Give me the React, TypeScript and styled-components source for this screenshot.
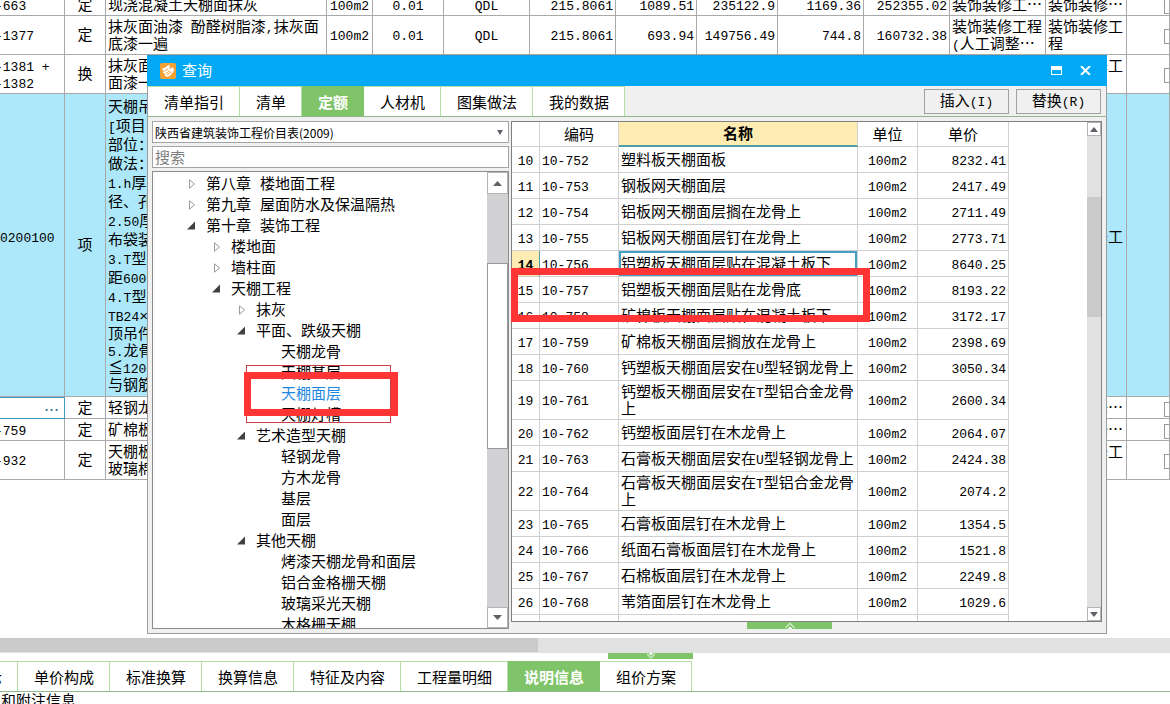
import React from "react";
import styled, { createGlobalStyle, css } from "styled-components";

const cjk = `"Noto Sans CJK SC", sans-serif`;
const mono = `"Liberation Mono", "Noto Sans CJK SC", monospace`;

const color = {
  text: "#000000",
  blue: "#03a9f4",
  green: "#7fc469",
  greenLine: "#b5dfa6",
  greenRule: "#8fb98a",
  cyan: "#ace8fa",
  yellow: "#ffecb3",
  teal: "#4f9fa8",
  panel: "#f0f0f0",
  grid: "#a9a9a9",
  gridLight: "#d0d0d0",
  red: "#ff3434",
  track: "#e1e1e1",
  thumb: "#cacaca",
};

const GlobalStyle = createGlobalStyle`
  *, *::before, *::after { box-sizing: border-box; }
  body { margin: 0; background: #fff; }
  button, input, select { font: inherit; color: inherit; margin: 0; }
`;

const Page = styled.div`
  position: relative;
  display: flex;
  flex-direction: column;
  height: 100vh;
  overflow: hidden;
  background: #fff;
  color: ${color.text};
  font: 15px/17px ${mono};
`;

/* ---------- worksheet behind the dialog ---------- */

const SheetArea = styled.main`
  flex: 1;
  min-height: 0;
  overflow: hidden;
`;

const SheetTable = styled.table`
  width: 100%;
  margin-top: -6px;
  table-layout: fixed;
  border-collapse: separate;
  border-spacing: 0;
`;

const SheetRow = styled.tr<{ $h: number; $active?: boolean }>`
  height: ${(p) => p.$h}px;
  background: ${(p) => (p.$active ? color.cyan : "#fff")};
`;

type Align = "left" | "center" | "right";

const SheetCell = styled.td<{ $align?: Align; $num?: boolean; $editing?: boolean }>`
  padding: 3px 2px 0;
  overflow: hidden;
  white-space: pre;
  vertical-align: middle;
  text-align: ${(p) => p.$align ?? "left"};
  border-right: 1px solid ${color.grid};
  border-bottom: 1px solid ${color.grid};
  ${(p) => p.$num && css`font-size: 13px;`}
  ${(p) =>
    p.$editing &&
    css`
      border-color: #3e9cc4;
      box-shadow: inset 0 1px 0 #3e9cc4;
    `}
`;

const Code = styled.div<{ $flush?: boolean }>`
  margin-left: ${(p) => (p.$flush ? -2 : -7)}px;
`;

const LineGroup = styled.div<{ $lh: number }>`
  line-height: ${(p) => p.$lh}px;
`;

const Dots = styled.span`
  font-family: ${cjk};
  line-height: 1px;
`;

const MoreButton = styled.button`
  display: block;
  margin-left: auto;
  padding: 0 3px;
  border: 0;
  background: none;
  color: #2d6f93;
  font: 15px/15px ${cjk};
`;

const Check = styled.input`
  display: block;
  appearance: none;
  width: 15px;
  height: 15px;
  margin-left: 35px;
  border: 1px solid #9a9a9a;
  background: #fff;
`;

const HScroll = styled.div`
  height: 15px;
  background: ${color.track};
`;

const HThumb = styled.div`
  width: 46%;
  height: 14px;
  background: ${color.thumb};
`;

/* ---------- tabs ---------- */

const Tab = styled.button<{ $active?: boolean }>`
  flex: none;
  padding: 0 15px 0 16px;
  border: 0;
  border-right: 1px solid ${(p) => (p.$active ? color.green : color.greenLine)};
  border-top: 1px solid ${(p) => (p.$active ? color.green : color.greenLine)};
  background: ${(p) => (p.$active ? color.green : "#fff")};
  color: ${(p) => (p.$active ? "#fff" : color.text)};
  font: ${(p) => (p.$active ? 700 : 400)} 15px/17px ${cjk};
  white-space: nowrap;
`;

const HandleRow = styled.div<{ $indent: string }>`
  display: flex;
  padding-left: ${(p) => p.$indent};
`;

const Handle = styled.button<{ $h: number }>`
  display: flex;
  justify-content: center;
  width: 85px;
  height: ${(p) => p.$h}px;
  padding: 0;
  border: 0;
  background: ${color.green};
`;

const BottomTabs = styled.nav`
  display: flex;
  height: 31px;
  margin-top: 2px;
  border-bottom: 1px solid ${color.greenRule};
`;

const BottomTabStrip = styled.div`
  display: flex;
  margin-left: -89px;
`;

const InfoLine = styled.div`
  height: 12px;
  padding-left: 1px;
  overflow: hidden;
  font: 15px/15px ${cjk};
`;

/* ---------- dialog ---------- */

const Dialog = styled.section`
  position: absolute;
  top: 55px;
  left: 147px;
  right: 63px;
  display: flex;
  flex-direction: column;
  height: 579px;
  background: ${color.panel};
  border: 1px solid #9c9c9c;
  border-top: 0;
`;

const TitleBar = styled.header`
  display: flex;
  align-items: center;
  flex: none;
  height: 31px;
  margin: 0 -1px;
  padding: 0 16px 0 13px;
  border-top: 1px solid #1c9bd6;
  background: ${color.blue};
  color: #fff;
  font-family: ${cjk};
`;

const Title = styled.h1`
  flex: 1;
  margin: 0 0 0 6px;
  padding-bottom: 4px;
  font: 400 15px/17px ${cjk};
`;

const WindowButton = styled.button`
  display: flex;
  padding: 0 0 2px;
  margin-left: 18px;
  border: 0;
  background: none;
`;

const Toolbar = styled.div`
  display: flex;
  justify-content: space-between;
  flex: none;
  height: 31px;
  border-bottom: 1px solid ${color.greenRule};
`;

const TabStrip = styled.div`
  display: flex;
`;

const Actions = styled.div`
  display: flex;
  align-items: center;
  gap: 7px;
  padding-right: 5px;
`;

const ActionButton = styled.button`
  width: 85px;
  height: 25px;
  padding: 2px 0 0;
  border: 1px solid #a0a0a0;
  background: ${color.panel};
  white-space: nowrap;
`;

const Latin = styled.span`
  font-size: 13px;
`;

const Body = styled.div`
  display: flex;
  flex: 1;
  min-height: 0;
  gap: 2px;
  padding: 4px;
`;

const Side = styled.div`
  position: relative;
  display: flex;
  flex-direction: column;
  flex: none;
  gap: 3px;
  width: 357px;
`;

const SelectBox = styled.label`
  display: flex;
  align-items: center;
  height: 22px;
  padding-right: 5px;
  border: 1px solid #a5a5a5;
  background: #fff;
`;

const BookSelect = styled.select`
  flex: 1;
  padding: 0 2px;
  appearance: none;
  border: 0;
  background: none;
  font: 12px/17px ${cjk};
`;

const Search = styled.input`
  height: 22px;
  padding: 0 2px 2px;
  border: 1px solid #a5a5a5;
  background: #fff;
  font: 15px/17px ${cjk};
  &::placeholder {
    color: #808080;
    opacity: 1;
  }
`;

const TreePanel = styled.div`
  display: flex;
  flex: 1;
  min-height: 0;
  border: 1px solid #8c8c8c;
  background: #fff;
`;

const TreeList = styled.ul`
  flex: 1;
  margin: 0;
  padding: 2px 0 0;
  overflow: hidden;
  list-style: none;
`;

const TreeItem = styled.li<{ $level: number; $selected?: boolean }>`
  display: flex;
  align-items: center;
  height: 21px;
  padding: 2px 0 0 ${(p) => p.$level * 25 + 9}px;
  color: ${(p) => (p.$selected ? "#1e88e0" : color.text)};
  white-space: pre;
`;

const Twisty = styled.span`
  display: flex;
  width: 19px;
  height: 14px;
`;

const VScroll = styled.div<{ $w: number; $track: string }>`
  display: flex;
  flex-direction: column;
  flex: none;
  width: ${(p) => p.$w}px;
  background: ${(p) => p.$track};
`;

const ScrollButton = styled.button<{ $h: number }>`
  display: flex;
  align-items: center;
  justify-content: center;
  flex: none;
  height: ${(p) => p.$h}px;
  padding: 0;
  border: 1px solid #b4b4b4;
  background: #fff;
`;

const ScrollTrack = styled.div<{ $before: number }>`
  flex: 1;
  padding-top: ${(p) => p.$before}px;
`;

const TreeThumb = styled.div`
  height: 186px;
  border: 1px solid #9a9a9a;
  background: #fff;
`;

const ListThumb = styled.div`
  height: 120px;
  background: ${color.thumb};
`;

const Main = styled.div`
  position: relative;
  display: flex;
  flex-direction: column;
  flex: 1;
  min-width: 0;
`;

const ListPanel = styled.div`
  display: flex;
  flex: 1;
  min-height: 0;
  border: 1px solid #808080;
  background: #fff;
`;

const ListView = styled.div`
  flex: 1;
  overflow: hidden;
`;

const ListTable = styled.table`
  width: 497px;
  table-layout: fixed;
  border-collapse: separate;
  border-spacing: 0;
`;

const HeadCell = styled.th<{ $sorted?: boolean }>`
  height: 25px;
  padding: 0 0 2px;
  border-right: 1px solid ${color.gridLight};
  border-bottom: ${(p) => (p.$sorted ? `2px solid ${color.teal}` : `1px solid ${color.gridLight}`)};
  background: ${(p) => (p.$sorted ? color.yellow : "#fff")};
  font: ${(p) => (p.$sorted ? 700 : 400)} 15px/17px ${cjk};
`;

const ListCell = styled.td<{ $align?: Align; $num?: boolean; $mark?: "index" | "name" }>`
  height: 26px;
  padding: 3px 2px 0;
  white-space: pre;
  vertical-align: middle;
  text-align: ${(p) => p.$align ?? "left"};
  border-right: 1px solid ${color.gridLight};
  border-bottom: 1px solid ${color.gridLight};
  ${(p) => p.$num && css`font-size: 13px;`}
  ${(p) =>
    p.$mark === "index" &&
    css`
      background: ${color.yellow};
      border-right-color: ${color.teal};
      font-weight: 700;
    `}
  ${(p) =>
    p.$mark === "name" &&
    css`
      box-shadow: inset 0 0 0 2px #45a0c6;
    `}
`;

const ListRow = styled.tr<{ $tall?: boolean }>`
  height: ${(p) => (p.$tall ? 39 : 26)}px;
`;

/* ---------- red marker boxes drawn over the panels ---------- */

const Marker = styled.div<{ $x: number; $y: number; $w: number; $h: number; $line: number }>`
  position: absolute;
  left: ${(p) => p.$x}px;
  top: ${(p) => p.$y}px;
  width: ${(p) => p.$w}px;
  height: ${(p) => p.$h}px;
  border: ${(p) => p.$line}px solid ${(p) => (p.$line > 1 ? color.red : "#d04048")};
  pointer-events: none;
`;

/* ---------- data ---------- */

const sheetColumns = [65, 41, 221, 46, 71, 86, 86, 81, 81, 86, 86, 96, 81];

/* Sets the half-width runs of a string in the smaller Latin size. */
const mix = (text: string) =>
  text.split(/([\x20-\x7e]+)/).map((part, i) => (i % 2 ? <Latin key={i}>{part}</Latin> : part));

type SheetData = {
  h: number;
  code: string;
  kind: string;
  name: React.ReactNode;
  values?: string[];
  fee?: React.ReactNode;
  major: React.ReactNode;
  active?: boolean;
  editing?: boolean;
};

const detailTop = [
  "天棚吊顶",
  "[项目",
  "部位：",
  "做法：",
  "1.h厚",
  "径、孔",
  "2.50厚",
  "布袋装",
  "3.T型",
  "距600",
  "4.T型",
  "TB24×",
];
const detailBottom = ["顶吊件", "5.龙骨", "≦1200", "与钢筋"];

const sheetRows: SheetData[] = [
  {
    h: 22,
    code: "-663",
    kind: "定",
    name: "现浇混凝土天棚面抹灰",
    values: ["100m2", "0.01", "QDL", "215.8061", "1089.51", "235122.9", "1169.36", "252355.02"],
    fee: <>装饰装修工<Dots>…</Dots></>,
    major: <>装饰装修<Dots>…</Dots></>,
  },
  {
    h: 39,
    code: "-1377",
    kind: "定",
    name: mix("抹灰面油漆 酚醛树脂漆,抹灰面\n底漆一遍"),
    values: ["100m2", "0.01", "QDL", "215.8061", "693.94", "149756.49", "744.8", "160732.38"],
    fee: <>{mix("装饰装修工程\n(人工调整")}<Dots>…</Dots></>,
    major: "装饰装修工\n程",
  },
  { h: 39, code: "-1381 +\n-1382", kind: "换", name: "抹灰面油\n面漆一遍", major: "装饰装修工\n程" },
  {
    h: 303,
    code: "0200100\n ",
    kind: "项",
    active: true,
    name: (
      <>
        <LineGroup $lh={19}>{mix(detailTop.join("\n"))}</LineGroup>
        <LineGroup $lh={17}>{mix(detailBottom.join("\n"))}</LineGroup>
      </>
    ),
    major: "装饰装修工\n程",
  },
  { h: 22, code: "", kind: "定", name: "轻钢龙骨", major: <>装饰装修<Dots>…</Dots></>, editing: true },
  { h: 22, code: "-759", kind: "定", name: "矿棉板天", major: <>装饰装修<Dots>…</Dots></> },
  { h: 39, code: "-932", kind: "定", name: "天棚板面\n玻璃棉板", major: "装饰装修工\n程" },
];

const valueAlign: Align[] = ["center", "center", "center", "right", "right", "right", "right", "right"];

type Node = { level: number; label: string; open?: boolean; leaf?: boolean; selected?: boolean };

const tree: Node[] = [
  { level: 1, label: "第八章 楼地面工程" },
  { level: 1, label: "第九章 屋面防水及保温隔热" },
  { level: 1, label: "第十章 装饰工程", open: true },
  { level: 2, label: "楼地面" },
  { level: 2, label: "墙柱面" },
  { level: 2, label: "天棚工程", open: true },
  { level: 3, label: "抹灰" },
  { level: 3, label: "平面、跌级天棚", open: true },
  { level: 4, label: "天棚龙骨", leaf: true },
  { level: 4, label: "天棚基层", leaf: true },
  { level: 4, label: "天棚面层", leaf: true, selected: true },
  { level: 4, label: "天棚灯槽", leaf: true },
  { level: 3, label: "艺术造型天棚", open: true },
  { level: 4, label: "轻钢龙骨", leaf: true },
  { level: 4, label: "方木龙骨", leaf: true },
  { level: 4, label: "基层", leaf: true },
  { level: 4, label: "面层", leaf: true },
  { level: 3, label: "其他天棚", open: true },
  { level: 4, label: "烤漆天棚龙骨和面层", leaf: true },
  { level: 4, label: "铝合金格栅天棚", leaf: true },
  { level: 4, label: "玻璃采光天棚", leaf: true },
  { level: 4, label: "木格栅天棚", leaf: true },
];

const quotas: [string, string, string, string][] = [
  ["10", "10-752", "塑料板天棚面板", "8232.41"],
  ["11", "10-753", "钢板网天棚面层", "2417.49"],
  ["12", "10-754", "铝板网天棚面层搁在龙骨上", "2711.49"],
  ["13", "10-755", "铝板网天棚面层钉在龙骨上", "2773.71"],
  ["14", "10-756", "铝塑板天棚面层贴在混凝土板下", "8640.25"],
  ["15", "10-757", "铝塑板天棚面层贴在龙骨底", "8193.22"],
  ["16", "10-758", "矿棉板天棚面层贴在混凝土板下", "3172.17"],
  ["17", "10-759", "矿棉板天棚面层搁放在龙骨上", "2398.69"],
  ["18", "10-760", "钙塑板天棚面层安在U型轻钢龙骨上", "3050.34"],
  ["19", "10-761", "钙塑板天棚面层安在T型铝合金龙骨\n上", "2600.34"],
  ["20", "10-762", "钙塑板面层钉在木龙骨上", "2064.07"],
  ["21", "10-763", "石膏板天棚面层安在U型轻钢龙骨上", "2424.38"],
  ["22", "10-764", "石膏板天棚面层安在T型铝合金龙骨\n上", "2074.2"],
  ["23", "10-765", "石膏板面层钉在木龙骨上", "1354.5"],
  ["24", "10-766", "纸面石膏板面层钉在木龙骨上", "1521.8"],
  ["25", "10-767", "石棉板面层钉在木龙骨上", "2249.8"],
  ["26", "10-768", "苇箔面层钉在木龙骨上", "1029.6"],
];

const dialogTabs = ["清单指引", "清单", "定额", "人材机", "图集做法", "我的数据"];
const bottomTabs = ["工料机显示", "单价构成", "标准换算", "换算信息", "特征及内容", "工程量明细", "说明信息", "组价方案"];

/* ---------- icons ---------- */

const Logo = () => (
  <svg width="16" height="16" viewBox="0 0 16 16" aria-hidden="true">
    <rect width="16" height="16" rx="2" fill="#f5a033" />
    <path
      d="M2.2 5.4 C4.6 5 6.8 3.6 8.2 2 L10.4 3.2 C10 4.4 9.2 5.4 8.4 6 C10 5.8 11.4 5.2 12.6 4.2 L14 6.4 C13.4 9.8 10.8 12.8 7 14 L4.6 12.2 L5.6 10.8 L3.4 10.6 L3 8.8 L4.4 7.6 L2.6 7.2 Z"
      fill="#fff"
    />
    <path d="M4.6 8.4 L8 5.8 M5.8 10.6 L10.2 7.4 M7 12.2 L11.6 8.8" stroke="#f5a033" strokeWidth="1" fill="none" />
  </svg>
);

const Triangle = ({ up, size = 9, fill = "#606068" }: { up?: boolean; size?: number; fill?: string }) => (
  <svg width={size} height="5" viewBox="0 0 10 5" preserveAspectRatio="none" aria-hidden="true">
    <path d={up ? "M0 5 L5 0 L10 5 Z" : "M0 0 L5 5 L10 0 Z"} fill={fill} />
  </svg>
);

const TwistyIcon = ({ open }: { open?: boolean }) => (
  <svg width="10" height="10" viewBox="0 0 10 10" aria-hidden="true">
    {open ? (
      <path d="M0 8.5 H8 V0.5 Z" fill="#404040" />
    ) : (
      <path d="M2.5 0.8 V9.2 L7.5 5 Z" fill="#fff" stroke="#9a9a9a" />
    )}
  </svg>
);

const DoubleChevron = ({ up }: { up?: boolean }) => (
  <svg width="10" height="7" viewBox="0 0 10 7" aria-hidden="true">
    {up ? (
      <>
        <path d="M0.5 6 L5 1.2 L9.5 6" fill="none" stroke="#cdebc2" strokeWidth="1.4" />
        <path d="M2.5 7 L5 4.4 L7.5 7 Z" fill="#fff" />
      </>
    ) : (
      <>
        <path d="M1 0.8 L5 5 L9 0.8" fill="none" stroke="#cdebc2" strokeWidth="1.4" />
        <path d="M2.8 0 L5 2.4 L7.2 0 Z" fill="#fff" />
      </>
    )}
  </svg>
);

/* ---------- parts ---------- */

function Sheet() {
  return (
    <SheetArea>
      <SheetTable>
        <colgroup>
          {sheetColumns.map((w, i) => (
            <col key={i} style={{ width: w }} />
          ))}
          <col />
        </colgroup>
        <tbody>
          {sheetRows.map((r, i) => (
            <SheetRow key={i} $h={r.h} $active={r.active}>
              <SheetCell $num $editing={r.editing}>
                {r.editing ? (
                  <MoreButton aria-label="选择编码">…</MoreButton>
                ) : (
                  <Code $flush={r.active}>{r.code}</Code>
                )}
              </SheetCell>
              <SheetCell $align="center">{r.kind}</SheetCell>
              <SheetCell>{r.name}</SheetCell>
              {valueAlign.map((align, k) => (
                <SheetCell key={k} $num $align={align}>
                  {r.values?.[k]}
                </SheetCell>
              ))}
              <SheetCell>{r.fee}</SheetCell>
              <SheetCell>{r.major}</SheetCell>
              <SheetCell>{!r.active && <Check type="checkbox" aria-label={`锁定 ${i + 1}`} />}</SheetCell>
            </SheetRow>
          ))}
        </tbody>
      </SheetTable>
    </SheetArea>
  );
}

function CatalogTree() {
  return (
    <TreePanel>
      <TreeList>
        {tree.map((n, i) => (
          <TreeItem key={i} $level={n.level} $selected={n.selected}>
            <Twisty>{!n.leaf && <TwistyIcon open={n.open} />}</Twisty>
            {n.label}
          </TreeItem>
        ))}
      </TreeList>
      <VScroll $w={21} $track="#d2d2d4">
        <ScrollButton $h={22} aria-label="向上滚动"><Triangle up /></ScrollButton>
        <ScrollTrack $before={69}><TreeThumb /></ScrollTrack>
        <ScrollButton $h={21} aria-label="向下滚动"><Triangle /></ScrollButton>
      </VScroll>
    </TreePanel>
  );
}

function QuotaList() {
  return (
    <ListPanel>
      <ListView>
        <ListTable>
          <colgroup>
            {[28, 79, 239, 60, 91].map((w, i) => (
              <col key={i} style={{ width: w }} />
            ))}
          </colgroup>
          <thead>
            <tr>
              <HeadCell />
              <HeadCell>编码</HeadCell>
              <HeadCell $sorted>名称</HeadCell>
              <HeadCell>单位</HeadCell>
              <HeadCell>单价</HeadCell>
            </tr>
          </thead>
          <tbody>
            {quotas.map(([index, code, name, price]) => {
              const current = index === "14";
              return (
                <ListRow key={index} $tall={name.includes("\n")}>
                  <ListCell $num $align="center" $mark={current ? "index" : undefined}>{index}</ListCell>
                  <ListCell $num>{code}</ListCell>
                  <ListCell $mark={current ? "name" : undefined}>{mix(name)}</ListCell>
                  <ListCell $num $align="center">100m2</ListCell>
                  <ListCell $num $align="right">{price}</ListCell>
                </ListRow>
              );
            })}
            <ListRow>
              <ListCell /><ListCell /><ListCell /><ListCell /><ListCell />
            </ListRow>
          </tbody>
        </ListTable>
      </ListView>
      <VScroll $w={14} $track={color.track}>
        <ScrollButton $h={14} aria-label="列表向上滚动"><Triangle up size={8} /></ScrollButton>
        <ScrollTrack $before={61}><ListThumb /></ScrollTrack>
        <ScrollButton $h={14} aria-label="列表向下滚动"><Triangle size={8} /></ScrollButton>
      </VScroll>
    </ListPanel>
  );
}

function QueryDialog() {
  return (
    <Dialog role="dialog" aria-label="查询">
      <TitleBar>
        <Logo />
        <Title>查询</Title>
        <WindowButton aria-label="最大化">
          <svg width="11" height="9" viewBox="0 0 11 9">
            <path d="M0 0 H11 V9 H0 Z M1 4 V8 H10 V4 Z" fill="#fff" fillRule="evenodd" />
          </svg>
        </WindowButton>
        <WindowButton aria-label="关闭">
          <svg width="11" height="9" viewBox="0 0 11 9">
            <path d="M1 0 L10 9 M10 0 L1 9" stroke="#fff" strokeWidth="2" />
          </svg>
        </WindowButton>
      </TitleBar>
      <Toolbar>
        <TabStrip>
          {dialogTabs.map((t) => (
            <Tab key={t} $active={t === "定额"}>{t}</Tab>
          ))}
        </TabStrip>
        <Actions>
          <ActionButton>{mix("插入(I)")}</ActionButton>
          <ActionButton>{mix("替换(R)")}</ActionButton>
        </Actions>
      </Toolbar>
      <Body>
        <Side>
          <SelectBox>
            <BookSelect aria-label="定额库" defaultValue="2009">
              <option value="2009">陕西省建筑装饰工程价目表(2009)</option>
            </BookSelect>
            <Triangle size={6} />
          </SelectBox>
          <Search aria-label="搜索" placeholder="搜索" />
          <CatalogTree />
          <Marker $x={94} $y={244} $w={145} $h={58} $line={1} />
          <Marker $x={92} $y={251} $w={154} $h={44} $line={7} />
        </Side>
        <Main>
          <QuotaList />
          <HandleRow $indent="40%">
            <Handle $h={7} aria-label="展开下方面板"><DoubleChevron up /></Handle>
          </HandleRow>
          <Marker $x={0} $y={147} $w={359} $h={54} $line={7} />
        </Main>
      </Body>
    </Dialog>
  );
}

export default function App() {
  return (
    <Page lang="zh-CN">
      <GlobalStyle />
      <Sheet />
      <HScroll><HThumb /></HScroll>
      <HandleRow $indent="52%">
        <Handle $h={6} aria-label="收起下方面板"><DoubleChevron /></Handle>
      </HandleRow>
      <BottomTabs>
        <BottomTabStrip>
          {bottomTabs.map((t) => (
            <Tab key={t} $active={t === "说明信息"}>{t}</Tab>
          ))}
        </BottomTabStrip>
      </BottomTabs>
      <InfoLine>和附注信息</InfoLine>
      <QueryDialog />
    </Page>
  );
}
